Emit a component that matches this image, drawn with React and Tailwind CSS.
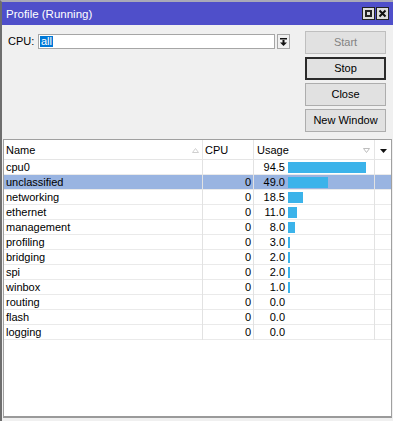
import React from "react";

const rows = [
  { name: "cpu0", cpu: "", usage: 94.5 },
  { name: "unclassified", cpu: "0", usage: 49.0, sel: true },
  { name: "networking", cpu: "0", usage: 18.5 },
  { name: "ethernet", cpu: "0", usage: 11.0 },
  { name: "management", cpu: "0", usage: 8.0 },
  { name: "profiling", cpu: "0", usage: 3.0 },
  { name: "bridging", cpu: "0", usage: 2.0 },
  { name: "spi", cpu: "0", usage: 2.0 },
  { name: "winbox", cpu: "0", usage: 1.0 },
  { name: "routing", cpu: "0", usage: 0.0 },
  { name: "flash", cpu: "0", usage: 0.0 },
  { name: "logging", cpu: "0", usage: 0.0 },
];

function barWidth(v) {
  if (v <= 0) return 0;
  if (v < 5) return 2;
  return Math.round(v * 0.825);
}

function Btn({ children, variant }) {
  const base =
    "w-[81px] h-[23px] flex items-center justify-center bg-[#e1e1e1] text-[11px]";
  if (variant === "disabled")
    return <div className={base + " border border-[#bfbfbf] text-[#838383]"}>{children}</div>;
  if (variant === "focus")
    return <div className={base + " border-2 border-[#2b2b2b] text-black"}>{children}</div>;
  return <div className={base + " border border-[#adadad] text-black"}>{children}</div>;
}

export default function App() {
  return (
    <div className="w-[393px] h-[421px] flex flex-col bg-[#f0f0f0] border-l-2 border-t-2 border-l-[#6e6e6e] border-t-[#a9a9b8] overflow-hidden font-['Liberation_Sans',Arial,sans-serif] text-[11px] text-black">
      {/* Title bar */}
      <div className="h-[23px] flex items-center justify-between bg-[#4f4fca] pl-[4px] pr-[4px]">
        <span className="text-white text-[11.5px] leading-none pt-[2px]">Profile (Running)</span>
        <div className="flex gap-[1px]">
          <div className="w-[13px] h-[13px] border border-[#222] bg-[#dcdcdc] flex items-center justify-center">
            <div className="w-[7px] h-[7px] border-2 border-[#222]" />
          </div>
          <div className="w-[13px] h-[13px] border border-[#222] bg-[#dcdcdc] flex items-center justify-center">
            <svg width="9" height="9" viewBox="0 0 9 9">
              <path d="M1.5 1.5 L7.5 7.5 M7.5 1.5 L1.5 7.5" stroke="#111" strokeWidth="2" />
            </svg>
          </div>
        </div>
      </div>

      {/* Top controls */}
      <div className="flex pt-[6px] pl-[6px]">
        <div className="flex items-start pt-[3px]">
          <span className="w-[30px] leading-[15px]">CPU:</span>
          <div className="w-[237px] h-[15px] border border-[#a6a6a6] bg-white flex items-center pl-[1px]">
            <span className="bg-[#0078d7] text-white leading-[11px] px-[1px]">all</span>
          </div>
          <div className="ml-[2px] w-[13px] h-[15px] border border-[#a6a6a6] bg-[#f0f0f0] flex items-center justify-center">
            <svg width="7" height="8" viewBox="0 0 7 8">
              <rect x="0" y="0" width="7" height="1.5" fill="#111" />
              <rect x="2.5" y="2" width="2" height="3" fill="#111" />
              <path d="M0 4.5 L7 4.5 L3.5 8 Z" fill="#111" />
            </svg>
          </div>
        </div>
        <div className="ml-[15px] flex flex-col gap-[3px]">
          <Btn variant="disabled">Start</Btn>
          <Btn variant="focus">Stop</Btn>
          <Btn>Close</Btn>
          <Btn>New Window</Btn>
        </div>
      </div>

      {/* Table */}
      <div className="mt-[7px] ml-[1px] mr-[1px] mb-[3px] flex-1 flex flex-col bg-white border border-[#a0a0a0] border-b-2 border-b-[#9a9a9a]">
        {/* Header */}
        <div className="grid grid-cols-[199px_51px_121px_16px] h-[20px] border-b border-[#e5e5e5]">
          <div className="border-r border-[#e5e5e5] flex items-center justify-between pl-[2px] pr-[3px] pt-[2px]">
            <span>Name</span>
            <svg width="7" height="5" viewBox="0 0 7 5">
              <path d="M0.5 4.5 L3.5 0.5 L6.5 4.5 Z" fill="none" stroke="#cfcfcf" strokeWidth="1" />
            </svg>
          </div>
          <div className="border-r border-[#e5e5e5] flex items-center pl-[2px] pt-[2px]">CPU</div>
          <div className="border-r border-[#e5e5e5] flex items-center justify-between pl-[3px] pr-[4px] pt-[2px]">
            <span>Usage</span>
            <svg width="7" height="5" viewBox="0 0 7 5">
              <path d="M0.5 0.5 L6.5 0.5 L3.5 4.5 Z" fill="none" stroke="#bdbdbd" strokeWidth="1" />
            </svg>
          </div>
          <div className="flex items-center justify-center pt-[2px]">
            <svg width="7" height="4" viewBox="0 0 7 4">
              <path d="M0 0 L7 0 L3.5 4 Z" fill="#111" />
            </svg>
          </div>
        </div>
        {/* Rows */}
        {rows.map((r) => (
          <div
            key={r.name}
            className={
              "grid grid-cols-[199px_51px_121px_16px] h-[15px] border-b border-[#eaeaea] leading-[15px] " +
              (r.sel ? "bg-[#99b4e1]" : "")
            }
          >
            <div className="border-r border-[#e2e2e2] pl-[2px]">{r.name}</div>
            <div className="border-r border-[#e2e2e2] text-right pr-[2px]">{r.cpu}</div>
            <div className="border-r border-[#e2e2e2] flex items-center">
              <span className="w-[31px] text-right">{r.usage.toFixed(1)}</span>
              <div
                className="ml-[3px] h-[11px] bg-[#3bb3ea]"
                style={{ width: barWidth(r.usage) + "px" }}
              />
            </div>
            <div />
          </div>
        ))}
      </div>
    </div>
  );
}
